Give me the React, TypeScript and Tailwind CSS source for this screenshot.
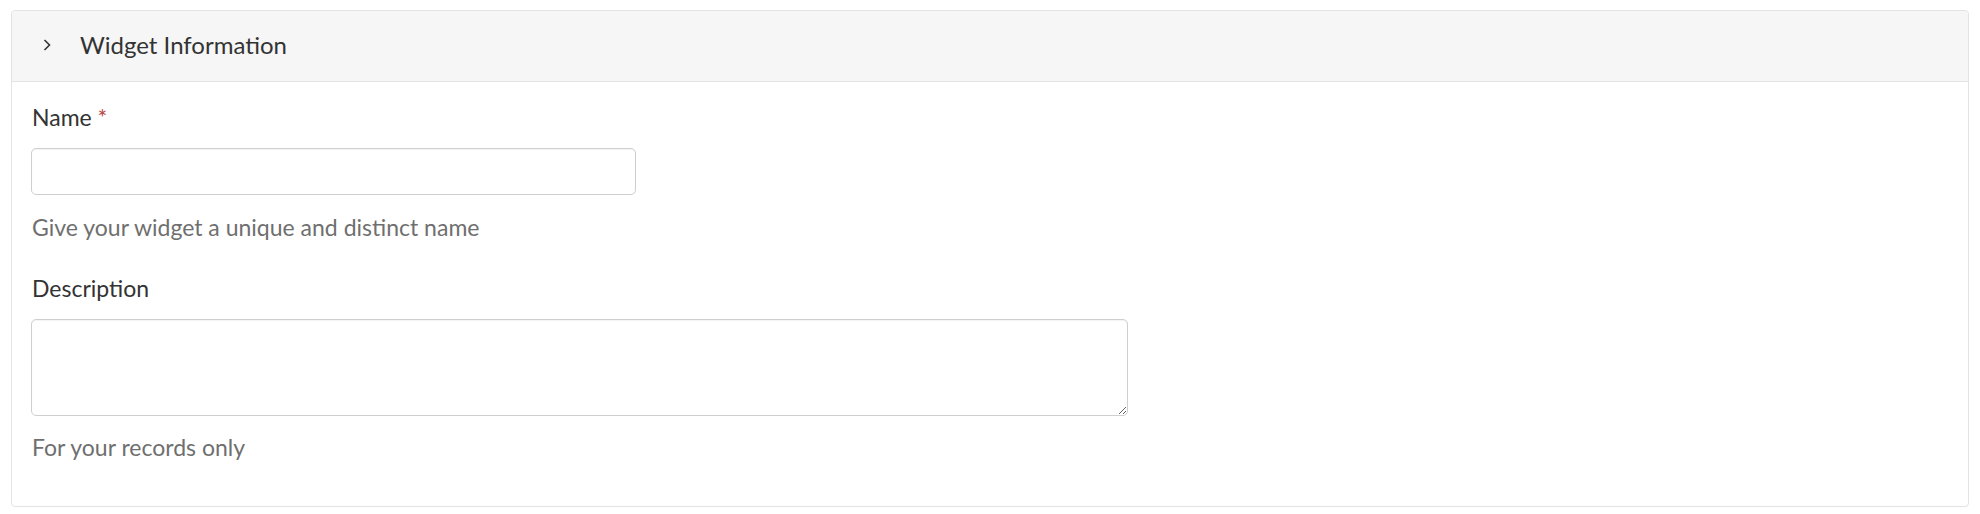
import React from 'react'

const font = { fontFamily: 'Lato, "Noto Sans", sans-serif' }

export default function App() {
  return (
    <div className="w-[1980px] h-[514px] bg-white pt-[10px] px-[11px]" style={font}>
      <div className="border border-[#e3e3e3] rounded-[4px] bg-white">
        <div className="h-[71px] bg-[#f6f6f6] border-b border-[#e3e3e3] rounded-t-[4px] flex items-center pl-[30px] pb-[2px]">
          <svg width="10" height="14" viewBox="0 0 10 14" className="text-[#333]">
            <path d="M2.5 2 L7.5 7 L2.5 12" fill="none" stroke="currentColor" strokeWidth="1.6" />
          </svg>
          <span className="ml-[28px] text-[24px] leading-[28px] text-[#333]">Widget Information</span>
        </div>
        <div className="px-[19px] pt-[21px] pb-[45px]">
          <label className="block text-[23px] leading-[28px] text-[#333] pl-[1px]">
            Name <span className="text-[#b94a48]">*</span>
          </label>
          <input
            type="text"
            className="mt-[17px] block w-[605px] h-[47px] rounded-[5px] border border-[#cfcfcf] bg-white shadow-[inset_0_1px_1px_rgba(0,0,0,0.05)] outline-none"
          />
          <p className="mt-[18px] text-[23px] leading-[28px] text-[#6f6f6f] pl-[1px]">Give your widget a unique and distinct name</p>
          <label className="block mt-[33px] text-[23px] leading-[28px] text-[#333] pl-[1px]">Description</label>
          <textarea className="mt-[17px] block w-[1097px] h-[97px] rounded-[5px] border border-[#cfcfcf] bg-white shadow-[inset_0_1px_1px_rgba(0,0,0,0.05)] outline-none" />
          <p className="mt-[17px] text-[23px] leading-[28px] text-[#6f6f6f] pl-[1px]">For your records only</p>
        </div>
      </div>
    </div>
  )
}
